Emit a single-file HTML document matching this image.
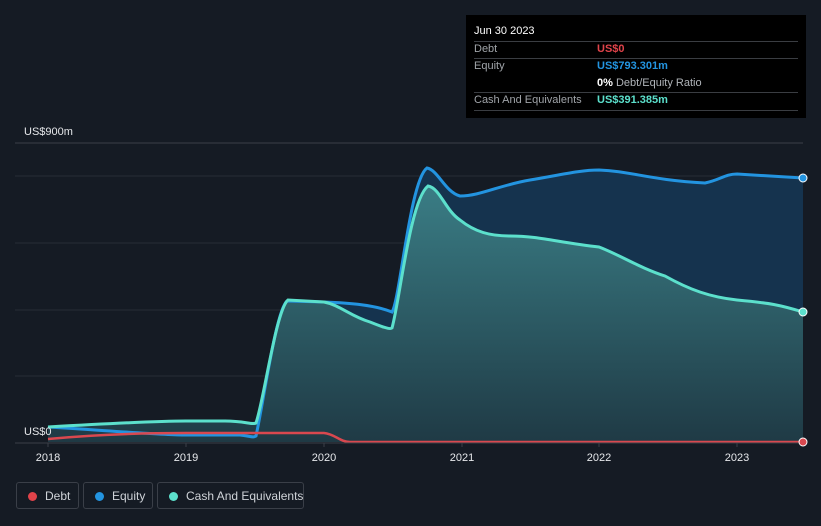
<!DOCTYPE html><html style="height:526px;overflow:hidden"><head><style>
body{margin:0;width:821px;height:526px;background:#151b24;font-family:"Liberation Sans",sans-serif;overflow:hidden;position:relative}
.tip{position:absolute;left:466px;top:15px;width:340px;height:103px;background:#000;color:#fff;font-size:11px}
.tip .r{position:absolute;left:8px;width:324px;border-top:1px solid #3a3d42}
.lg{position:absolute;top:482px;height:27px;border:1px solid #3a3f48;border-radius:3px;color:#cfd3d8;font-size:12px;line-height:27px;box-sizing:border-box;white-space:nowrap}
.lg i{position:absolute;left:11px;top:9px;width:9px;height:9px;border-radius:50%}
.lg span{position:absolute;left:28px}
</style></head><body>
<svg width="821" height="526" style="position:absolute;left:0;top:0">
<defs><linearGradient id="g" x1="0" y1="0" x2="0" y2="1"><stop offset="0" stop-color="#3a7d85"/><stop offset="1" stop-color="#1f3a45"/></linearGradient></defs>
<line x1="15" y1="143" x2="803" y2="143" stroke="#3a3f48"/>
<g stroke="#262c36"><line x1="15" y1="176" x2="803" y2="176"/><line x1="15" y1="243" x2="803" y2="243"/><line x1="15" y1="310" x2="803" y2="310"/><line x1="15" y1="376" x2="803" y2="376"/></g>
<path d="M48,427 C100,430 160,435 186,435 L240,435 C250,436 253,438 256,436 C264,400 276,310 287,301 L324,302 C350,303 375,305 392,312 C400,300 410,180 427,168 C438,170 445,192 460,196 C480,196 500,185 530,180 C560,175 580,170 599,170 C630,171 650,180 705,183 C720,180 725,174 737,174 L803,178 L803,442 L48,442Z" fill="#15334e"/>
<path d="M48,427 C100,424 160,421 186,421 L225,421 C245,421 252,425 256,423 C264,400 276,310 288,300 L324,302 C340,305 350,316 370,322 C380,326 390,330 392,328 C400,300 410,200 428,186 C440,188 445,210 460,220 C475,232 490,236 510,236 C540,236 560,243 599,247 C620,255 640,268 665,276 C690,290 710,297 737,300 C770,303 780,305 803,312 L803,442 L48,442Z" fill="url(#g)"/>
<path d="M48,427 C100,430 160,435 186,435 L240,435 C250,436 253,438 256,436 C264,400 276,310 287,301 L324,302 C350,303 375,305 392,312 C400,300 410,180 427,168 C438,170 445,192 460,196 C480,196 500,185 530,180 C560,175 580,170 599,170 C630,171 650,180 705,183 C720,180 725,174 737,174 L803,178" fill="none" stroke="#2394e0" stroke-width="3"/>
<path d="M48,427 C100,424 160,421 186,421 L225,421 C245,421 252,425 256,423 C264,400 276,310 288,300 L324,302 C340,305 350,316 370,322 C380,326 390,330 392,328 C400,300 410,200 428,186 C440,188 445,210 460,220 C475,232 490,236 510,236 C540,236 560,243 599,247 C620,255 640,268 665,276 C690,290 710,297 737,300 C770,303 780,305 803,312" fill="none" stroke="#5ce0cc" stroke-width="3"/>
<path d="M48,439 C100,434 150,433 186,433 L324,433 C335,434 340,442 350,442 L803,442" fill="none" stroke="#d9484f" stroke-width="2.5"/>
<line x1="15" y1="443" x2="803" y2="443" stroke="#3a3f48"/>
<g stroke="#3a3f48"><line x1="48" y1="443" x2="48" y2="447"/><line x1="186" y1="443" x2="186" y2="447"/><line x1="324" y1="443" x2="324" y2="447"/><line x1="462" y1="443" x2="462" y2="447"/><line x1="599" y1="443" x2="599" y2="447"/><line x1="737" y1="443" x2="737" y2="447"/></g>
<circle cx="803" cy="178" r="4" fill="#2394e0" stroke="#fff"/>
<circle cx="803" cy="312" r="4" fill="#5ce0cc" stroke="#fff"/>
<circle cx="803" cy="442" r="4" fill="#d9484f" stroke="#fff"/>
<g fill="#e6e8eb" font-size="11" text-anchor="middle"><text x="48" y="461">2018</text><text x="186" y="461">2019</text><text x="324" y="461">2020</text><text x="462" y="461">2021</text><text x="599" y="461">2022</text><text x="737" y="461">2023</text></g>
<text x="24" y="135" fill="#e6e8eb" font-size="11">US$900m</text>
<text x="24" y="435" fill="#e6e8eb" font-size="11">US$0</text>
</svg>
<div class="tip">
<div style="position:absolute;left:8px;top:10px">Jun 30 2023</div>
<div class="r" style="top:26px"></div>
<div style="position:absolute;left:8px;top:28px;color:#a0a4a9">Debt</div><div style="position:absolute;left:131px;top:28px;color:#e0434a;font-weight:bold">US$0</div>
<div class="r" style="top:43px"></div>
<div style="position:absolute;left:8px;top:45px;color:#a0a4a9">Equity</div><div style="position:absolute;left:131px;top:45px;color:#2394e0;font-weight:bold">US$793.301m</div>
<div style="position:absolute;left:131px;top:62px"><b>0%</b> <span style="color:#b0b4b9">Debt/Equity Ratio</span></div>
<div class="r" style="top:77px"></div>
<div style="position:absolute;left:8px;top:79px;color:#a0a4a9">Cash And Equivalents</div><div style="position:absolute;left:131px;top:79px;color:#5ce0cc;font-weight:bold">US$391.385m</div>
<div class="r" style="top:95px"></div>
</div>
<div class="lg" style="left:16px;width:63px"><i style="background:#e0434a"></i><span>Debt</span></div>
<div class="lg" style="left:83px;width:70px"><i style="background:#2394e0"></i><span>Equity</span></div>
<div class="lg" style="left:157px;width:147px"><i style="background:#5ce0cc"></i><span>Cash And Equivalents</span></div>
</body></html>
